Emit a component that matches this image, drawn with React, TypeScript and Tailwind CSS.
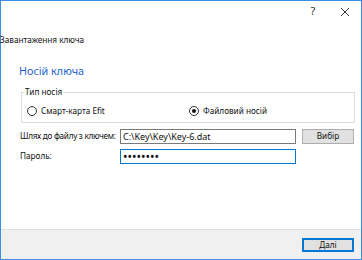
export default function App() {
  return (
    <div className="w-[362px] h-[260px] bg-white border border-[#3d8fe3] flex flex-col font-['Noto_Sans',sans-serif] text-[8.2px] text-[#111]">
      {/* title bar */}
      <div className="h-[21px] flex items-center justify-end">
        <div className="w-[32px] text-center text-[11px] text-[#333]">?</div>
        <div className="w-[32px] flex justify-center">
          <svg width="10" height="10" viewBox="0 0 10 10">
            <path d="M1 1 L9 9 M9 1 L1 9" stroke="#333" strokeWidth="1" />
          </svg>
        </div>
      </div>

      <div className="mt-[11px] h-[14px] leading-[14px] -ml-[1px] whitespace-nowrap">Завантаження ключа</div>

      <div className="mt-[15px] h-[18px] leading-[18px] pl-[18px] text-[10.8px] text-[#1f5fcf]">Носій ключа</div>

      {/* group box */}
      <div className="relative mt-[12px] ml-[20px] w-[334px] h-[31px] border border-[#dcdcdc]">
        <span className="absolute -top-[7px] left-[2px] bg-white px-[1px] leading-[12px]">Тип носія</span>
        <div className="flex items-center h-[12px] mt-[12px] pl-[5px]">
          <label className="w-[162px] flex items-center gap-[4px] whitespace-nowrap">
            <span className="w-[10px] h-[10px] rounded-full border border-[#333] bg-white" />
            <span>Смарт-карта Efit</span>
          </label>
          <label className="flex items-center gap-[4px] whitespace-nowrap">
            <span className="w-[10px] h-[10px] rounded-full border border-[#333] bg-white flex items-center justify-center">
              <span className="w-[4px] h-[4px] rounded-full bg-[#111]" />
            </span>
            <span>Файловий носій</span>
          </label>
        </div>
      </div>

      {/* path row */}
      <div className="mt-[6px] flex items-center pl-[19px]">
        <div className="w-[100px] whitespace-nowrap tracking-[-0.3px]">Шлях до файлу з ключем:</div>
        <div className="w-[176px] h-[15px] border border-[#7a7a7a] px-[2px] leading-[13px] text-[9px] whitespace-nowrap">C:\Key\Key\Key-6.dat</div>
        <div className="ml-[6px] w-[52px] h-[15px] border border-[#adadad] bg-[#e1e1e1] flex items-center justify-center">Вибір</div>
      </div>

      {/* password row */}
      <div className="mt-[5px] flex items-center pl-[19px]">
        <div className="w-[100px]">Пароль:</div>
        <div className="w-[176px] h-[15px] border border-[#0078d7] px-[2px] leading-[13px] text-[12px]">••••••••</div>
      </div>

      <div className="flex-1" />

      {/* footer */}
      <div className="h-[30px] border-t border-[#dfdfdf] bg-[#f0f0f0] flex justify-end pt-[8px] pr-[7px]">
        <div className="w-[52px] h-[14px] border-2 border-[#0078d7] bg-[#e1e1e1] flex items-center justify-center leading-none">Далі</div>
      </div>
    </div>
  );
}
